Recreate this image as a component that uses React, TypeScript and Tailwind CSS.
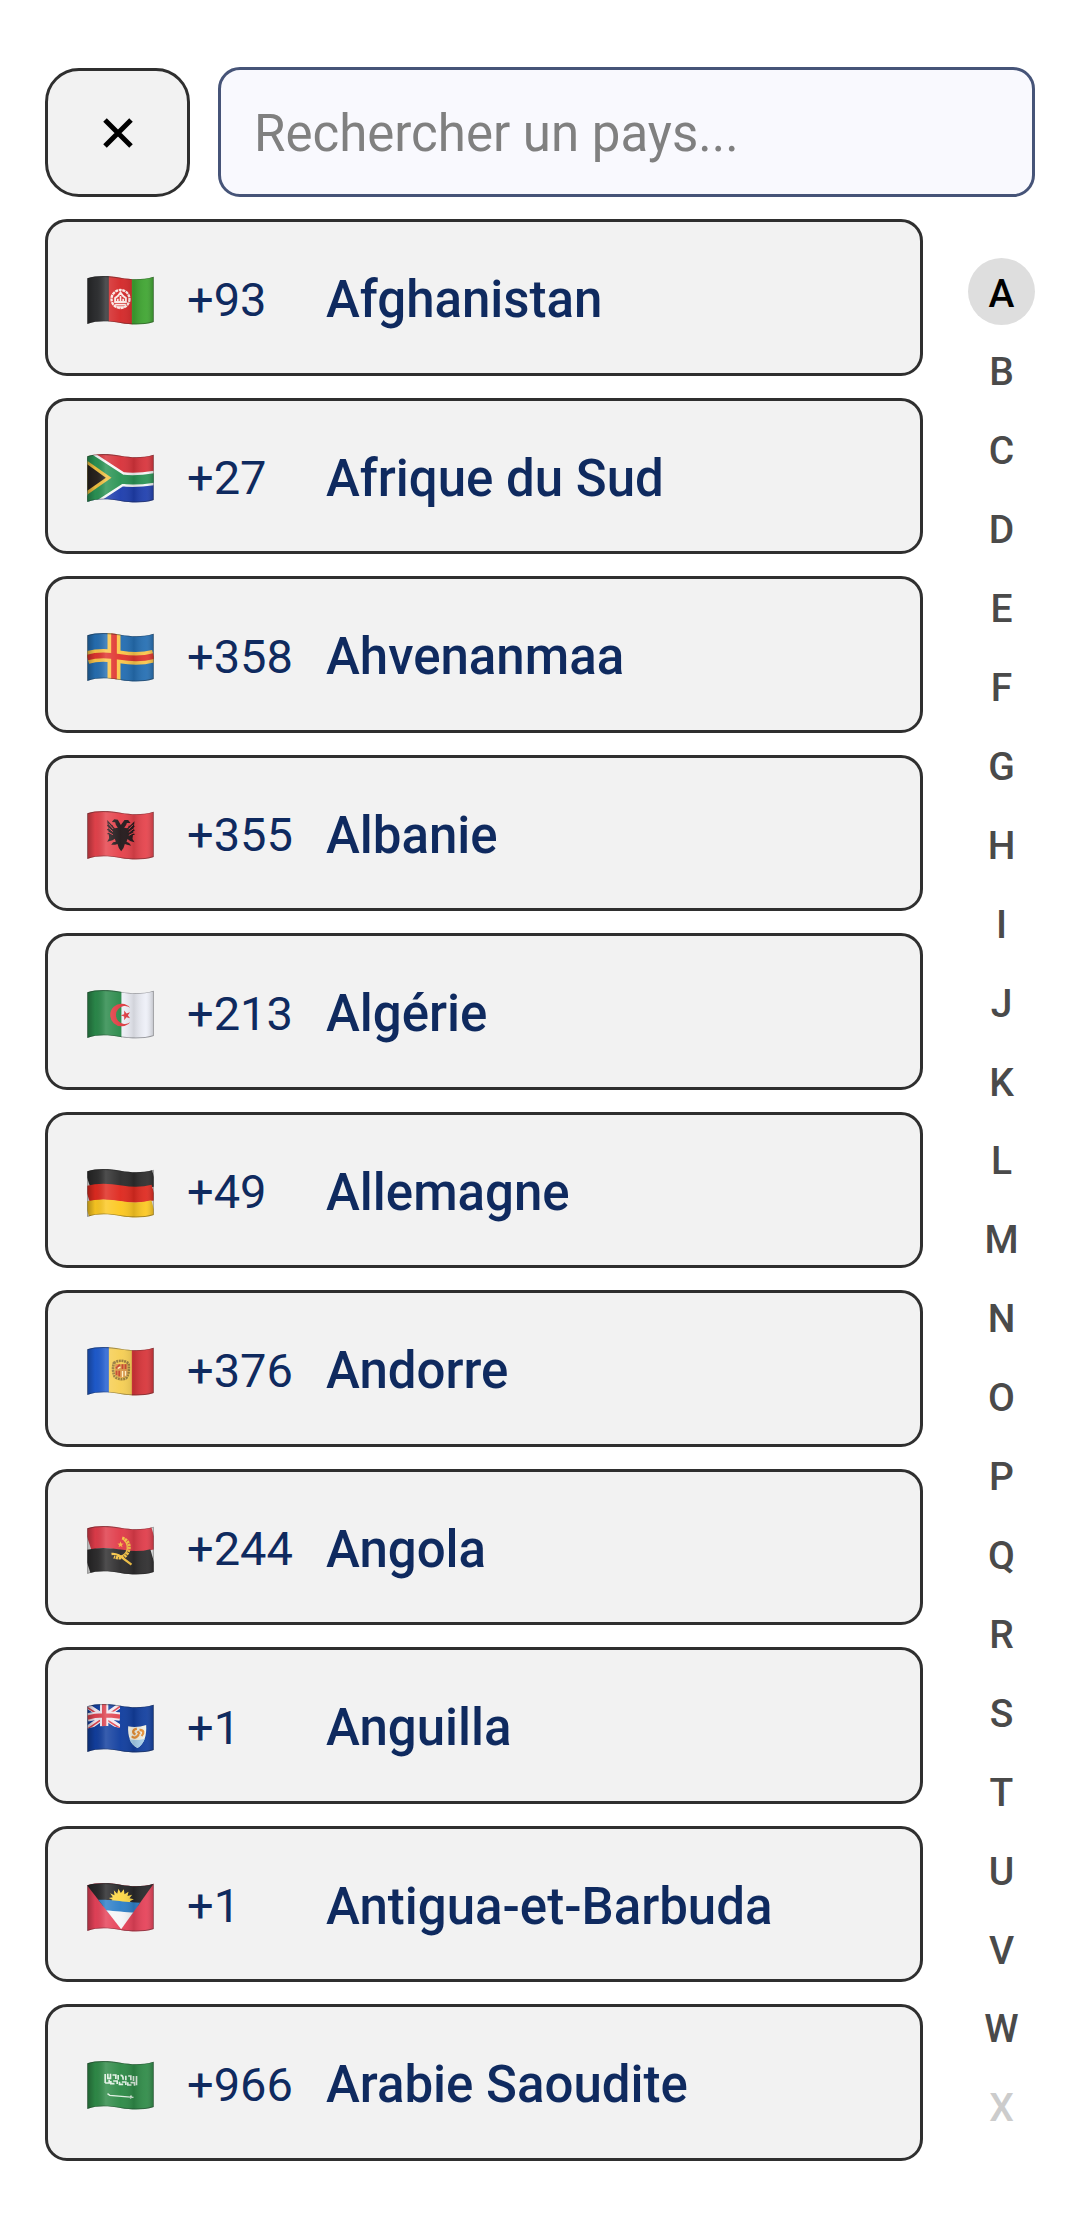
import { useState } from 'react'
import type { ReactNode } from 'react'

interface Country { iso: string; code: string; name: string }

const COUNTRIES: Country[] = [
  { iso: 'AF', code: '+93',  name: 'Afghanistan' },
  { iso: 'ZA', code: '+27',  name: 'Afrique du Sud' },
  { iso: 'AX', code: '+358', name: 'Ahvenanmaa' },
  { iso: 'AL', code: '+355', name: 'Albanie' },
  { iso: 'DZ', code: '+213', name: 'Algérie' },
  { iso: 'DE', code: '+49',  name: 'Allemagne' },
  { iso: 'AD', code: '+376', name: 'Andorre' },
  { iso: 'AO', code: '+244', name: 'Angola' },
  { iso: 'AI', code: '+1',   name: 'Anguilla' },
  { iso: 'AG', code: '+1',   name: 'Antigua-et-Barbuda' },
  { iso: 'SA', code: '+966', name: 'Arabie Saoudite' },
]
const LETTERS = 'ABCDEFGHIJKLMNOPQRSTUVWX'.split('')
const EMPTY_LETTERS = ['X']

// Line that follows the cloth of the flag at height y
const wave = (y: number) => `M0 ${y + 7}C30 ${y - 3} 65 ${y - 1} 100 ${y + 5}S165 ${y + 12} 200 ${y + 2}`
const CLOTH = `${wave(0)}V138C165 148 135 147 100 141S30 133 0 144Z`
const STAR = 'M0 -10L2.4 -3.2L9.5 -3.1L3.8 1.2L5.9 8.1L0 4L-5.9 8.1L-3.8 1.2L-9.5 -3.1L-2.4 -3.2Z'

function Stripe({ y, h, color }: { y: number; h: number; color: string }) {
  return <path d={wave(y)} stroke={color} strokeWidth={h} fill="none"/>
}

function Columns({ colors }: { colors: [string, string, string] }) {
  return (
    <>
      <path fill={colors[0]} d="M0 0H66V150H0Z"/>
      <path fill={colors[1]} d="M65 0H135V150H65Z"/>
      <path fill={colors[2]} d="M134 0H200V150H134Z"/>
    </>
  )
}

const FLAGS: Record<string, ReactNode> = {
  AF: (
    <>
      <Columns colors={['#2f3032', '#d42a2b', '#3fa531']}/>
      <g stroke="#fbe9e6" fill="none">
        <circle cx="100" cy="69" r="27" strokeWidth="7" strokeDasharray="9 2"/>
        <path d="M84 78V66L92 60L100 50L108 60L116 66V78Z" strokeWidth="6"/>
        <path d="M92 78V68M100 78V60M108 78V68M84 86H116M88 93H112" strokeWidth="5"/>
      </g>
    </>
  ),
  ZA: (
    <>
      <path fill="#d8343c" d="M0 0H200V75H0Z"/>
      <path fill="#1f3fae" d="M0 74H200V150H0Z"/>
      <g fill="none" strokeLinejoin="miter">
        <path d="M-10 2L102 75C140 81 170 77 205 71M-10 148L102 75" stroke="#f5f6f6" strokeWidth="43"/>
        <path d="M-10 2L102 75C140 81 170 77 205 71M-10 148L102 75" stroke="#2b9455" strokeWidth="28"/>
      </g>
      <path fill="#2b9455" d="M0 10L90 70L0 140Z"/>
      <path fill="#f2c141" d="M0 20L73 71L0 122Z"/>
      <path fill="#29231f" d="M0 31L56 71L0 110Z"/>
    </>
  ),
  AX: (
    <>
      <path fill="#256fb3" d="M0 0H200V150H0Z"/>
      <path fill="#fcc64b" d="M61 0H100V150H61Z"/>
      <Stripe y={67} h={38} color="#fcc64b"/>
      <path fill="#e0352f" d="M72 0H89V150H72Z"/>
      <Stripe y={67} h={17} color="#e0352f"/>
    </>
  ),
  AL: (
    <>
      <path fill="#e6434c" d="M0 0H200V150H0Z"/>
      <g fill="#241a1c">
        <path d="M101 42L92 26L81 25L74 33L84 34L86 41L92 50L83 52L74 42L60 27L66 82L60 92L76 88L83 83L86 92L78 94L72 101L84 101L91 99L95 111L102 121L109 111L113 99L120 101L132 104L126 96L118 92L121 84L129 90L142 94L136 84L142 31L130 43L120 52L111 50L117 42L119 36L130 36L123 27L112 27Z"/>
        <path d="M60 44H76M60 56H76M61 68H76M124 46H142M124 58H142M124 70H142" stroke="#241a1c" strokeWidth="4"/>
      </g>
      <path d="M64 38L78 54M63 50L77 62M63 63L77 71M138 41L124 55M139 53L125 64M138 66L125 73" stroke="#e6434c" strokeWidth="3"/>
    </>
  ),
  DZ: (
    <>
      <path fill="#2b8a4b" d="M0 0H104V150H0Z"/>
      <path fill="#eef0f8" d="M103 0H200V150H103Z"/>
      <path fill="#e03c43" d="M129 53A34 34 0 1 0 129 97A27 27 0 1 1 129 53Z"/>
      <path fill="#e03c43" d={STAR} transform="translate(116 76) rotate(-18) scale(1.55)"/>
    </>
  ),
  DE: (
    <>
      <Stripe y={20} h={60} color="#2d2d2d"/>
      <Stripe y={68} h={48} color="#df2a20"/>
      <Stripe y={118} h={54} color="#fcc822"/>
    </>
  ),
  AD: (
    <>
      <Columns colors={['#1f5cd0', '#f6cf55', '#d8353a']}/>
      <path fill="none" stroke="#96793a" strokeWidth="8" strokeDasharray="6 2" d="M80 48C96 38 112 40 124 49C126 66 125 84 117 93C104 101 88 95 82 88C76 72 77 60 80 48Z"/>
      <path fill="#d99548" d="M84 51H121V84C110 96 94 94 84 84Z"/>
      <path fill="none" stroke="#c7422c" strokeWidth="5" d="M86 64L98 53M106 52V66M115 52V66M88 84V71M96 88V71"/>
      <path fill="none" stroke="#fff1c6" strokeWidth="4" d="M92 64L100 60M106 72V90M115 72V86"/>
    </>
  ),
  AO: (
    <>
      <Stripe y={27} h={80} color="#e03c4a"/>
      <Stripe y={104} h={76} color="#2e2d2e"/>
      <path fill="none" stroke="#f6c445" strokeWidth="9" strokeDasharray="7 2" d="M105 36C124 42 133 62 121 82C114 94 99 100 80 93"/>
      <path fill="none" stroke="#f6c445" strokeWidth="7" d="M73 84C86 82 102 91 113 101L133 116"/>
      <path fill="none" stroke="#f6c445" strokeWidth="4" d="M110 41C120 50 124 66 117 78C111 88 100 92 90 91"/>
      <path fill="#f6b845" d={STAR} transform="translate(100 56)"/>
    </>
  ),
  AI: (
    <>
      <path fill="#123f9f" d="M0 0H200V150H0Z"/>
      <clipPath id="ai-canton"><path d="M0 0H99V72C60 63 30 65 0 74Z"/></clipPath>
      <g clipPath="url(#ai-canton)" fill="none">
        <path d="M0 6L99 70M0 74L99 4" stroke="#f3e9f0" strokeWidth="16"/>
        <path d="M0 10L99 73M0 76L99 7" stroke="#e04450" strokeWidth="5"/>
        <path d="M51 0V75M0 41C30 31 60 32 99 38" stroke="#f3e9f0" strokeWidth="25"/>
        <path d="M51 0V75M0 41C30 31 60 32 99 38" stroke="#e04450" strokeWidth="13"/>
      </g>
      <path fill="#f4f3e6" d="M123 67C140 70 160 69 177 63C179 94 172 119 151 132C130 122 121 96 123 67Z"/>
      <path fill="#a9d2ee" d="M127 106C142 110 158 108 173 104C168 117 161 126 151 132C139 126 131 118 127 106Z"/>
      <path fill="none" stroke="#ea9238" strokeWidth="7" d="M149 74C134 78 136 88 145 91M134 97C141 105 151 99 155 91M157 78C170 77 172 88 163 96M151 82L158 90"/>
    </>
  ),
  AG: (
    <>
      <path fill="#e64259" d="M0 0H200V150H0Z"/>
      <clipPath id="ag-wedge"><path d="M-4 2L102 139L204 -4Z"/></clipPath>
      <g clipPath="url(#ag-wedge)">
        <path fill="#28282a" d="M0 0H200V70H0Z"/>
        <path fill="#fdd849" d="M68 58L76 50L65 45L77 43L69 31L82 37L80 22L90 32L94 17L101 30L110 19L112 34L124 26L121 39L135 35L127 46L140 49L128 55L136 62Z"/>
        <path fill="#2f80c8" d="M0 50H48C80 50 120 60 200 60V96H0Z"/>
        <path fill="#f5f5f7" d="M0 80C80 80 120 91 200 91V150H0Z"/>
      </g>
    </>
  ),
  SA: (
    <>
      <path fill="#2f8b48" d="M0 0H200V150H0Z"/>
      <g fill="none" stroke="#dff0e2">
        <path strokeWidth="5" d="M54 39V66M62 38V52H70V38M76 42H86V54M93 42V56M100 43Q108 42 108 56M116 44V58M123 45H131V58M139 45V60M148 45V73"/>
        <path strokeWidth="5" d="M54 66H66V56M71 60V68H82M78 60H90V69M97 62V70H108M104 63H116V72M122 64V72H133M130 65H142V74"/>
        <path strokeWidth="4" d="M61 98L68 103L139 109M132 103L130 113"/>
      </g>
    </>
  ),
}

function Flag({ iso }: { iso: string }) {
  return (
    <svg viewBox="0 0 200 147" className="mt-[6px] h-[49px] w-[67px] shrink-0" aria-hidden="true">
      <defs>
        <clipPath id={`cloth-${iso}`}><path d={CLOTH}/></clipPath>
        <linearGradient id={`shade-${iso}`}>
          <stop offset="0" stopColor="#000" stopOpacity=".3"/>
          <stop offset=".12" stopColor="#000" stopOpacity=".04"/>
          <stop offset=".28" stopColor="#fff" stopOpacity=".16"/>
          <stop offset=".5" stopColor="#fff" stopOpacity=".03"/>
          <stop offset=".7" stopColor="#000" stopOpacity=".12"/>
          <stop offset=".88" stopColor="#fff" stopOpacity=".06"/>
          <stop offset="1" stopColor="#000" stopOpacity=".2"/>
        </linearGradient>
      </defs>
      <g clipPath={`url(#cloth-${iso})`}>
        {FLAGS[iso]}
        <path d={CLOTH} fill={`url(#shade-${iso})`} stroke="#222" strokeOpacity=".4" strokeWidth="5"/>
      </g>
    </svg>
  )
}

export default function CountryPicker() {
  const [query, setQuery]   = useState('')
  const [letter, setLetter] = useState('A')

  const filtered = COUNTRIES.filter(c => c.name.toLowerCase().includes(query.toLowerCase()))

  return (
    <div className="flex min-h-screen flex-col gap-[22px] bg-white px-[45px] pt-[67px] pb-[53px] font-[Roboto,sans-serif]">
      <header className="flex items-end gap-7">
        <button type="button" aria-label="Fermer"
          className="flex h-[129px] w-[145px] shrink-0 items-center justify-center rounded-[34px] border-3 border-[#2f2f2f] bg-[#f2f2f2]">
          <svg viewBox="0 0 30 30" className="size-[30px]" stroke="#000" strokeWidth="5" aria-hidden="true">
            <path d="M2 2L28 28M28 2L2 28"/>
          </svg>
        </button>
        <input type="text" aria-label="Rechercher un pays" placeholder="Rechercher un pays..."
          value={query} onChange={e => setQuery(e.target.value)}
          className="h-[130px] min-w-0 flex-1 rounded-[22px] border-3 border-[#465478] bg-[#f9f9fe] px-[33px] pt-[3px] text-[51px] text-[#0f2a5f] outline-none placeholder:text-[#808080]"/>
      </header>

      <main className="flex flex-1 gap-[45px]">
        <ul className="flex flex-1 flex-col gap-[22px]">
          {filtered.map(c => (
            <li key={c.iso} className="flex flex-1">
              <button type="button"
                className="flex w-full items-center rounded-[22px] border-3 border-[#2f2f2f] bg-[#f2f2f2] px-[39px] text-left text-[#0f2a5f]">
                <Flag iso={c.iso}/>
                <span className="ml-[33px] w-[139px] shrink-0 pt-[5px] text-[47px]">{c.code}</span>
                <span className="pt-[6px] text-[51px] font-medium">{c.name}</span>
              </button>
            </li>
          ))}
        </ul>

        <nav aria-label="Index alphabétique" className="flex flex-col justify-between pt-[39px] pb-[21px]">
          {LETTERS.map(l => (
            <button key={l} type="button" onClick={() => setLetter(l)} disabled={EMPTY_LETTERS.includes(l)}
              className={`flex size-[67px] items-center justify-center rounded-full pt-[5px] text-[39px] leading-none font-medium
                ${l === letter ? 'bg-[#dedede] text-black' : EMPTY_LETTERS.includes(l) ? 'text-[#cccccc]' : 'text-[#4a4a4a]'}`}>
              {l}
            </button>
          ))}
        </nav>
      </main>
    </div>
  )
}
